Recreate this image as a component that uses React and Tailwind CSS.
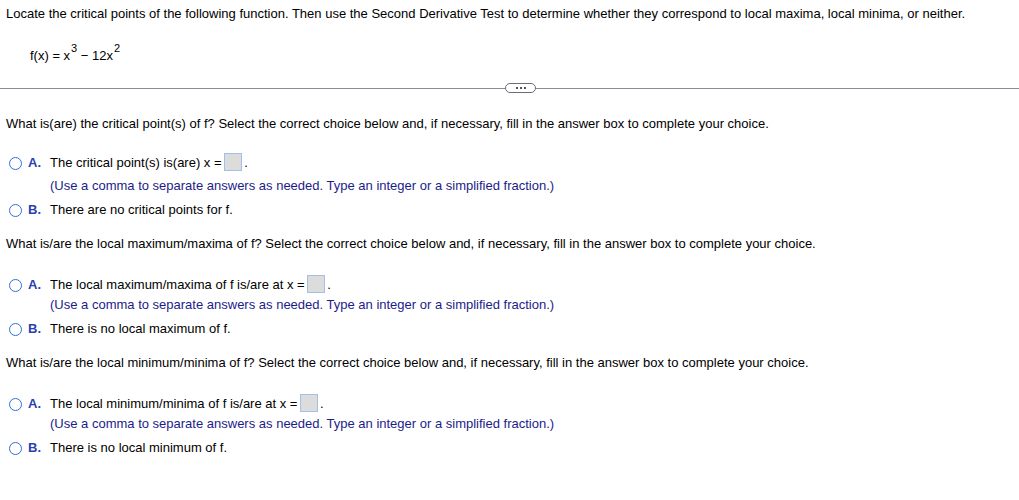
const FONT = { fontFamily: '"Liberation Sans", Arial, sans-serif' };

function Box() {
  return (
    <span className="inline-block w-[18px] h-[18px] align-middle bg-[#dcdcdc] border border-[#a6bfe6] mr-[2px] -ml-[1px] -mt-[3px]" />
  );
}

function Radio({ letter, children, hint, hintGap }) {
  return (
    <div className="flex items-start">
      <span className="w-[13px] h-[13px] rounded-full border-[1.5px] border-[#2f6fd6] ml-[9px] mt-[3px] shrink-0" />
      <span className="ml-[6px] w-[22px] text-[#2a3fb0] font-bold text-[13px] leading-[18px]">{letter}</span>
      <div className="flex flex-col">
        <div className="leading-[18px]">{children}</div>
        {hint && <div className={`text-[#1c1c8a] leading-[18px] ${hintGap}`}>{hint}</div>}
      </div>
    </div>
  );
}

function Question({ q, a, b, top, gap, hintGap }) {
  return (
    <div>
      <p className={`pl-[6px] leading-[18px] ${top}`}>{q}</p>
      <div className={`flex flex-col gap-[6px] ${gap}`}>
        <Radio letter="A." hintGap={hintGap} hint="(Use a comma to separate answers as needed. Type an integer or a simplified fraction.)">
          {a} <Box />.
        </Radio>
        <Radio letter="B.">{b}</Radio>
      </div>
    </div>
  );
}

export default function App() {
  return (
    <div className="w-[1019px] h-[500px] bg-white text-[13px] text-black overflow-hidden" style={FONT}>
      <p className="pl-[6px] pt-[5px] leading-[18px]">
        Locate the critical points of the following function. Then use the Second Derivative Test to determine whether they correspond to local maxima, local minima, or neither.
      </p>
      <div className="pl-[30px] mt-[24px] leading-[18px] text-[13px]">
        f(x) = x<sup className="text-[11px] -top-[8px] ml-[1px]">3</sup> − 12x<sup className="text-[11px] -top-[8px] ml-[1px]">2</sup>
      </div>
      <div className="relative mt-[18px] h-[10px] flex items-center">
        <div className="w-full h-px bg-[#8b8b98]" />
        <div className="absolute left-[505px] top-0 w-[31px] h-[10px] rounded-full border border-[#6d6d7a] bg-white flex items-center justify-center gap-[2px]">
          <span className="w-[2px] h-[2px] bg-[#555]" />
          <span className="w-[2px] h-[2px] bg-[#555]" />
          <span className="w-[2px] h-[2px] bg-[#555]" />
        </div>
      </div>
      <Question
        top="mt-[22px]"
        gap="mt-[21px]"
        hintGap="mt-[5px]"
        q="What is(are) the critical point(s) of f? Select the correct choice below and, if necessary, fill in the answer box to complete your choice."
        a="The critical point(s) is(are) x ="
        b="There are no critical points for f."
      />
      <Question
        top="mt-[16px]"
        gap="mt-[23px]"
        hintGap="mt-[2px]"
        q="What is/are the local maximum/maxima of f? Select the correct choice below and, if necessary, fill in the answer box to complete your choice."
        a="The local maximum/maxima of f is/are at x ="
        b="There is no local maximum of f."
      />
      <Question
        top="mt-[16px]"
        gap="mt-[23px]"
        hintGap="mt-[2px]"
        q="What is/are the local minimum/minima of f? Select the correct choice below and, if necessary, fill in the answer box to complete your choice."
        a="The local minimum/minima of f is/are at x ="
        b="There is no local minimum of f."
      />
    </div>
  );
}
